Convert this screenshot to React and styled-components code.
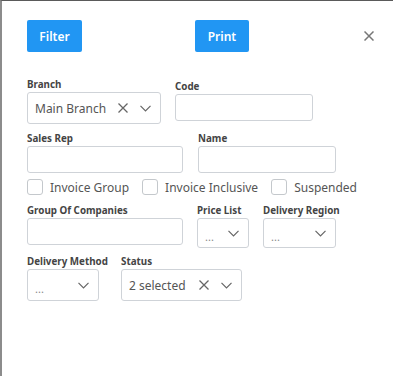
import React from 'react'
import styled, { createGlobalStyle } from 'styled-components';

const GlobalStyle = createGlobalStyle`
  html, body {
    margin: 0;
    padding: 0;
    background: #fff;
  }
  body {
    font-family: "Noto Sans", "Open Sans", Arial, sans-serif;
  }
`;

const Dialog = styled.div`
  box-sizing: border-box;
  width: 393px;
  height: 376px;
  border-top: 1px solid #5a5a5a;
  border-left: 2px solid #8c8c8c;
  background: #fff;
  padding: 19px 0 0 25px;
`;

const Header = styled.div`
  display: flex;
  align-items: center;
  height: 32px;
`;

const ActionButton = styled.button`
  box-sizing: border-box;
  height: 32px;
  width: ${({ w }) => w}px;
  margin-left: ${({ ml }) => ml || 0}px;
  border: none;
  border-radius: 2px;
  background: #2196f3;
  color: #fff;
  font-family: "Noto Sans", Arial, sans-serif;
  font-size: 12px;
  font-weight: 600;
  padding: 0;
  cursor: pointer;
`;

const CloseButton = styled.button`
  margin-left: 114px;
  width: 12px;
  height: 12px;
  padding: 0;
  border: none;
  background: transparent;
  display: flex;
  align-items: center;
  justify-content: center;
`;

const Form = styled.div`
  margin-top: 27px;
  display: flex;
  flex-direction: column;
`;

const Row = styled.div`
  display: flex;
  align-items: flex-start;
  margin-top: ${({ mt }) => mt || 0}px;
`;

const Field = styled.div`
  display: flex;
  flex-direction: column;
  width: ${({ w }) => w}px;
  margin-left: ${({ ml }) => ml || 0}px;
  margin-top: ${({ mt }) => mt || 0}px;
`;

const Label = styled.label`
  font-size: 9.8px;
  line-height: 12px;
  font-weight: 700;
  color: #444;
  margin-bottom: 1px;
  white-space: nowrap;
`;

const Input = styled.input`
  box-sizing: border-box;
  width: 100%;
  height: ${({ h }) => h || 27}px;
  border: 1px solid #cfd3d8;
  border-radius: 3px;
  background: #fff;
  outline: none;
`;

const SelectBox = styled.div`
  box-sizing: border-box;
  width: 100%;
  height: ${({ h }) => h || 32}px;
  border: 1px solid #cfd3d8;
  border-radius: 3px;
  background: #fff;
  display: flex;
  align-items: center;
  padding: 0 9px 0 7px;
`;

const SelectValue = styled.span`
  flex: 1;
  font-size: 12px;
  color: ${({ placeholder }) => (placeholder ? '#888' : '#555')};
  white-space: nowrap;
  overflow: hidden;
  ${({ placeholder }) => placeholder && 'font-size: 11px; padding-top: 6px;'}
`;

const IconSlot = styled.span`
  display: flex;
  align-items: center;
  margin-left: ${({ ml }) => ml || 0}px;
`;

const CheckRow = styled.div`
  display: flex;
  align-items: center;
  height: 20px;
  margin-top: 4px;
`;

const CheckItem = styled.label`
  display: flex;
  align-items: center;
  margin-right: 13px;
  font-size: 12px;
  color: #555;
`;

const Box = styled.span`
  box-sizing: border-box;
  width: 16px;
  height: 16px;
  border: 1px solid #c4c8cc;
  border-radius: 3px;
  background: #fff;
  margin-right: 7px;
`;

const Cross = ({ size = 10, color = '#666', stroke = 1.3 }) => (
  <svg width={size} height={size} viewBox="0 0 10 10">
    <path d="M0.5 0.5 L9.5 9.5 M9.5 0.5 L0.5 9.5" stroke={color} strokeWidth={stroke} fill="none" />
  </svg>
);

const Chevron = () => (
  <svg width="11" height="7" viewBox="0 0 11 7">
    <path d="M0.5 0.8 L5.5 5.8 L10.5 0.8" stroke="#666" strokeWidth="1.2" fill="none" />
  </svg>
);

const Select = ({ value, placeholder, clearable, h }) => (
  <SelectBox h={h}>
    <SelectValue placeholder={placeholder ? 1 : 0}>{value || '...'}</SelectValue>
    {clearable && (
      <IconSlot>
        <Cross />
      </IconSlot>
    )}
    <IconSlot ml={clearable ? 12 : 0}>
      <Chevron />
    </IconSlot>
  </SelectBox>
);

const checks = ['Invoice Group', 'Invoice Inclusive', 'Suspended'];

export default function App() {
  return (
    <>
      <GlobalStyle />
      <Dialog>
        <Header>
          <ActionButton w={55}>Filter</ActionButton>
          <ActionButton w={54} ml={113}>Print</ActionButton>
          <CloseButton>
            <Cross size={10} color="#777" stroke={1.5} />
          </CloseButton>
        </Header>
        <Form>
          <Row>
            <Field w={134}>
              <Label>Branch</Label>
              <Select value="Main Branch" clearable />
            </Field>
            <Field w={138} ml={14} mt={2}>
              <Label>Code</Label>
              <Input />
            </Field>
          </Row>
          <Row mt={9}>
            <Field w={156}>
              <Label>Sales Rep</Label>
              <Input />
            </Field>
            <Field w={138} ml={15}>
              <Label>Name</Label>
              <Input />
            </Field>
          </Row>
          <CheckRow>
            {checks.map((c) => (
              <CheckItem key={c}>
                <Box />
                {c}
              </CheckItem>
            ))}
          </CheckRow>
          <Row mt={8}>
            <Field w={156}>
              <Label>Group Of Companies</Label>
              <Input />
            </Field>
            <Field w={52} ml={14}>
              <Label>Price List</Label>
              <Select h={30} placeholder />
            </Field>
            <Field w={73} ml={14}>
              <Label>Delivery Region</Label>
              <Select h={30} placeholder />
            </Field>
          </Row>
          <Row mt={8}>
            <Field w={72}>
              <Label>Delivery Method</Label>
              <Select h={32} placeholder />
            </Field>
            <Field w={121} ml={22}>
              <Label>Status</Label>
              <Select value="2 selected" clearable />
            </Field>
          </Row>
        </Form>
      </Dialog>
    </>
  );
}
